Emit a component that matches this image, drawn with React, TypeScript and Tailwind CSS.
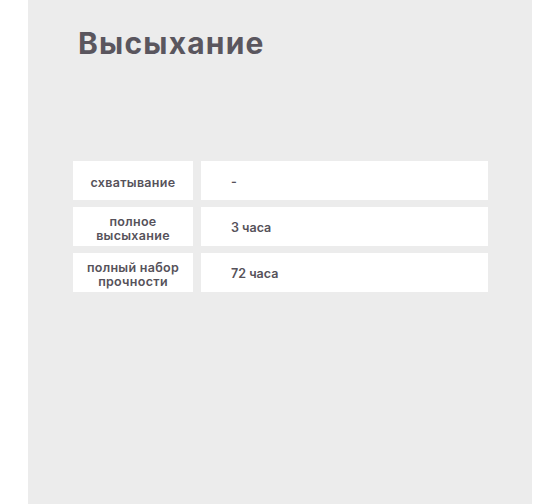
export default function App() {
  const rows = [
    { name: 'схватывание', value: '-' },
    { name: 'полное высыхание', value: '3 часа' },
    { name: 'полный набор прочности', value: '72 часа' },
  ];

  return (
    <div className="w-[560px] h-[504px] bg-white overflow-hidden" style={{ fontFamily: 'Inter, "Noto Sans", sans-serif' }}>
      <div className="ml-[28px] w-[504px] h-[504px] bg-[#ececec] pt-[25px]">
        <h1 className="pl-[50px] text-[30px] leading-[36px] font-bold text-[#5a565e] tracking-[1.2px]">
          Высыхание
        </h1>

        {/* Таблица */}
        <div className="mt-[100px] pl-[45px] flex flex-col gap-[7px]">
          {rows.map((row) => (
            <div key={row.name} className="flex gap-[8px] h-[39px]">
              <div className="w-[120px] bg-white flex items-center justify-center px-2 pt-[4px]">
                <span className="text-center text-[12.5px] leading-[13.5px] font-semibold text-[#56525a] tracking-[0.3px]">
                  {row.name}
                </span>
              </div>
              <div className="w-[287px] bg-white flex items-center pl-[30px] pt-[4px]">
                <span className="text-[12.5px] font-semibold text-[#56525a]">{row.value}</span>
              </div>
            </div>
          ))}
        </div>
      </div>
    </div>
  );
}
